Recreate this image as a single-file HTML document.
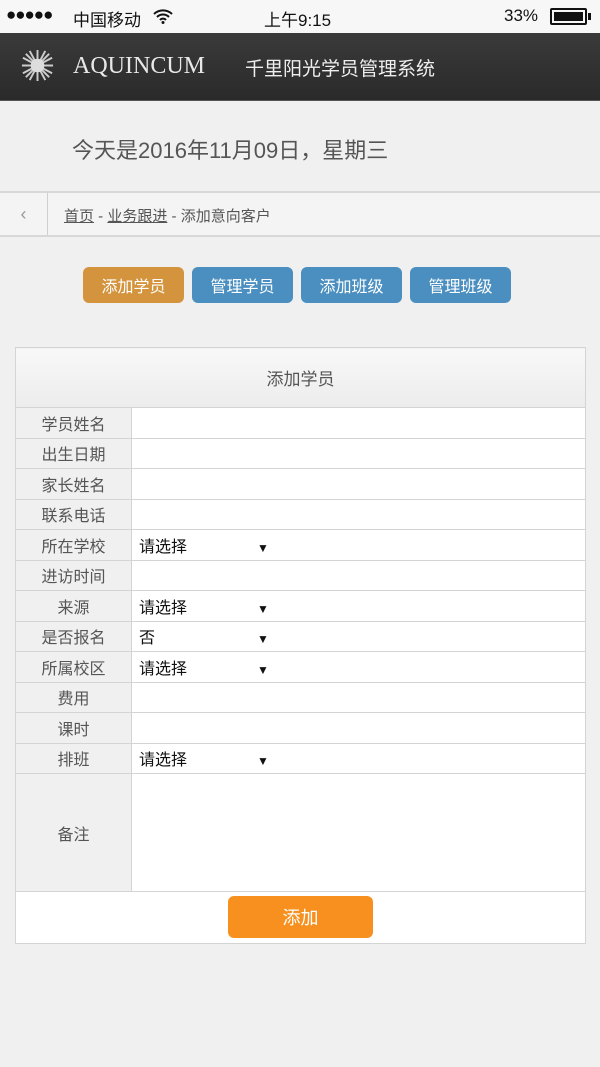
<!DOCTYPE html>
<html><head><meta charset="utf-8"><style>
*{margin:0;padding:0;box-sizing:border-box}
body{width:600px;height:1067px;background:#f0f0f0;font-family:"Liberation Sans","Noto Sans CJK SC",sans-serif;position:relative;overflow:hidden}
.abs{position:absolute}
.sb{top:0;left:0;width:600px;height:33px;background:#f7f7f7;font-size:17px;color:#111}
.hd{top:33px;left:0;width:600px;height:68px;background:linear-gradient(#3a3a3a,#2a2a2a);border-bottom:1px solid #555}
.btn{top:267px;height:36px;width:101px;border-radius:6px;color:#fff;font-size:16px;display:flex;align-items:center;justify-content:center;background:#4a8fc0}
table{position:absolute;left:15px;top:347px;width:571px;border-collapse:collapse;background:#fff}
td{border:1px solid #d4d4d4;height:30.5px;font-size:16px;vertical-align:middle}
td.l{width:116px;background:#f0f0f0;color:#555;text-align:center}
td.v{padding-left:7px;color:#111}
.ar{display:inline-block;margin-left:70px;font-size:12px}
</style></head><body>
<div class="abs sb">
<span class="abs" style="left:6px;top:5px;letter-spacing:-1px">●●●●●</span>
<span class="abs" style="left:73px;top:6px">中国移动</span>
<svg class="abs" style="left:152px;top:8px" width="22" height="16" viewBox="0 0 22 16"><path d="M2 6a13 13 0 0 1 18 0M5 9a8.5 8.5 0 0 1 12 0M8 12a4 4 0 0 1 6 0" stroke="#111" stroke-width="2" fill="none"/><circle cx="11" cy="14.5" r="1.5" fill="#111"/></svg>
<span class="abs" style="left:264px;top:6px">上午9:15</span>
<span class="abs" style="left:504px;top:6px">33%</span>
<div class="abs" style="left:550px;top:8px;width:37px;height:17px;border:2px solid #111;border-radius:2px;padding:2px"><div style="background:#111;height:100%;width:100%"></div></div>
<div class="abs" style="left:588px;top:13px;width:3px;height:7px;background:#111"></div>
</div>
<div class="abs hd">
<svg class="abs" style="left:20px;top:15px" width="35" height="35" viewBox="0 0 36 36"><g stroke="#ccc" stroke-width="2"><path d="M18 2v32M2 18h32M6 6l24 24M30 6L6 30M10 3l16 30M26 3L10 33M3 10l30 16M33 10L3 26"/></g><circle cx="18" cy="18" r="7" fill="#ddd"/></svg>
<span class="abs" style="left:73px;top:20px;font-family:'Liberation Serif',serif;font-size:24px;color:#e8e8e8">AQUINCUM</span>
<span class="abs" style="left:245px;top:21px;font-size:19px;color:#eee">千里阳光学员管理系统</span>
</div>
<div class="abs" style="left:72px;top:133px;font-size:22px;color:#555">今天是2016年11月09日，星期三</div>
<div class="abs" style="left:0;top:191px;width:600px;height:46px;background:#f4f4f4;border-top:2px solid #d8d8d8;border-bottom:2px solid #d8d8d8">
<div class="abs" style="left:0;top:0;width:48px;height:42px;border-right:1px solid #d0d0d0;color:#999;text-align:center;line-height:42px;font-size:18px">&lsaquo;</div>
<div class="abs" style="left:64px;top:12px;font-size:15px;color:#555"><u>首页</u> - <u>业务跟进</u> - 添加意向客户</div>
</div>
<div class="abs btn" style="left:83px;background:#d4943e">添加学员</div>
<div class="abs btn" style="left:192px">管理学员</div>
<div class="abs btn" style="left:301px">添加班级</div>
<div class="abs btn" style="left:410px">管理班级</div>
<table>
<tr><td colspan="2" style="height:60px;text-align:center;font-size:17px;color:#555;background:linear-gradient(#f8f8f8,#ececec)">添加学员</td></tr>
<tr><td class="l">学员姓名</td><td class="v"></td></tr>
<tr><td class="l">出生日期</td><td class="v"></td></tr>
<tr><td class="l">家长姓名</td><td class="v"></td></tr>
<tr><td class="l">联系电话</td><td class="v"></td></tr>
<tr><td class="l">所在学校</td><td class="v">请选择<span class="ar">▼</span></td></tr>
<tr><td class="l">进访时间</td><td class="v"></td></tr>
<tr><td class="l">来源</td><td class="v">请选择<span class="ar">▼</span></td></tr>
<tr><td class="l">是否报名</td><td class="v">否<span class="ar" style="margin-left:102px">▼</span></td></tr>
<tr><td class="l">所属校区</td><td class="v">请选择<span class="ar">▼</span></td></tr>
<tr><td class="l">费用</td><td class="v"></td></tr>
<tr><td class="l">课时</td><td class="v"></td></tr>
<tr><td class="l">排班</td><td class="v">请选择<span class="ar">▼</span></td></tr>
<tr><td class="l" style="height:118px">备注</td><td class="v"></td></tr>
<tr><td colspan="2" style="height:52px;border-top:1px solid #d4d4d4"></td></tr>
</table>
<div class="abs" style="left:228px;top:896px;width:145px;height:42px;background:#f7901e;border-radius:6px;color:#fff;font-size:18px;display:flex;align-items:center;justify-content:center">添加</div>
</body></html>
